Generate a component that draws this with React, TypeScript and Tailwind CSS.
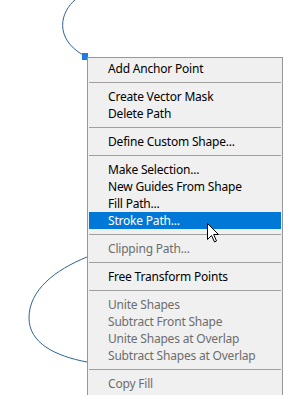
type MenuEntry =
  | { kind: "item"; label: string; disabled?: boolean; active?: boolean }
  | { kind: "sep" };

const entries: MenuEntry[] = [
  { kind: "item", label: "Add Anchor Point" },
  { kind: "sep" },
  { kind: "item", label: "Create Vector Mask" },
  { kind: "item", label: "Delete Path" },
  { kind: "sep" },
  { kind: "item", label: "Define Custom Shape..." },
  { kind: "sep" },
  { kind: "item", label: "Make Selection..." },
  { kind: "item", label: "New Guides From Shape" },
  { kind: "item", label: "Fill Path..." },
  { kind: "item", label: "Stroke Path...", active: true },
  { kind: "sep" },
  { kind: "item", label: "Clipping Path...", disabled: true },
  { kind: "sep" },
  { kind: "item", label: "Free Transform Points" },
  { kind: "sep" },
  { kind: "item", label: "Unite Shapes", disabled: true },
  { kind: "item", label: "Subtract Front Shape", disabled: true },
  { kind: "item", label: "Unite Shapes at Overlap", disabled: true },
  { kind: "item", label: "Subtract Shapes at Overlap", disabled: true },
  { kind: "sep" },
  { kind: "item", label: "Copy Fill", disabled: true },
];

// mouse pointer sitting over the hovered row
function Cursor() {
  return (
    <svg width="13" height="20" viewBox="0 0 13 20" className="absolute left-[118px] top-[11px]">
      <path
        d="M0.5 0.5 L0.5 16.5 L4.5 12.5 L7.5 19 L9.5 18 L6.7 11.5 L11.5 11.5 Z"
        fill="#fff"
        stroke="#000"
        strokeWidth="1"
      />
    </svg>
  );
}

function ContextMenu() {
  return (
    <div
      className="absolute left-[87px] top-[57px] h-[360px] w-[196px] border border-[#979797] bg-[#f0f0f0] px-px pt-[2px] text-[12px] leading-[17px] tracking-[-0.2px]"
      style={{ fontFamily: '"Noto Sans", "Open Sans", sans-serif' }}
    >
      {entries.map((entry, i) =>
        entry.kind === "sep" ? (
          <div key={i} className="py-[5px]">
            <div className="h-px bg-[#a0a0a0]" />
          </div>
        ) : (
          <div
            key={i}
            className={`relative h-[17px] whitespace-nowrap pl-[19px] ${
              entry.active ? "bg-[#0078d7] text-white" : entry.disabled ? "text-[#6d6d6d]" : "text-black"
            }`}
          >
            {entry.label}
            {entry.active ? <Cursor /> : null}
          </div>
        )
      )}
    </div>
  );
}

export default function App() {
  return (
    <div className="relative h-[395px] w-[283px] overflow-hidden bg-white">
      <svg width="283" height="395" className="absolute left-0 top-0">
        <path d="M76 -1 C60 12, 54 38, 83 55" fill="none" stroke="#2e6391" strokeWidth="1" />
        <path
          d="M87 257 C55 270, 29 290, 29 318 C29 343, 55 356, 87 362"
          fill="none"
          stroke="#2e6391"
          strokeWidth="1"
        />
        <rect x="82" y="53" width="6" height="7" fill="#1e7be0" />
      </svg>
      <ContextMenu />
    </div>
  );
}
